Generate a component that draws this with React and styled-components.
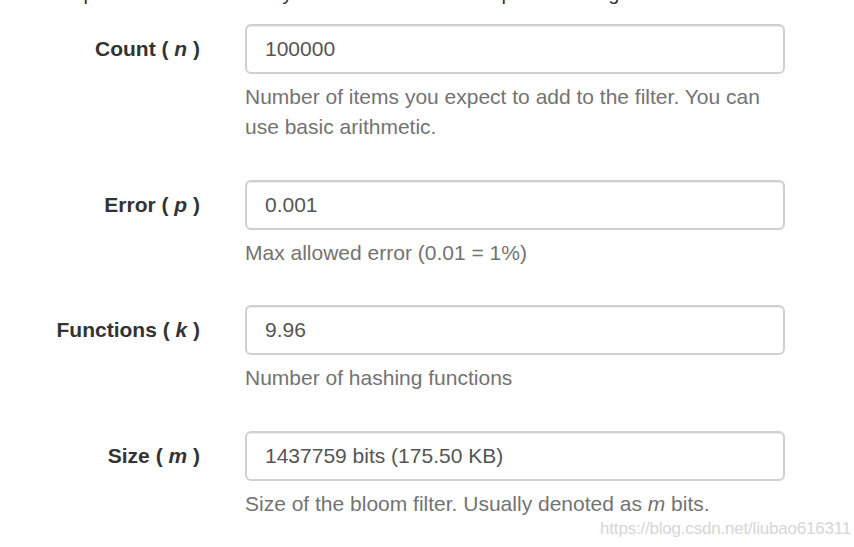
import React from 'react'
import styled, { createGlobalStyle } from 'styled-components'

const GlobalStyle = createGlobalStyle`
  html, body {
    margin: 0;
    padding: 0;
    background: #fff;
    overflow: hidden;
  }
  body {
    font-family: "Liberation Sans", Arial, sans-serif;
    color: #333;
  }
`

const Page = styled.div`
  position: relative;
  width: 854px;
  height: 547px;
  overflow: hidden;
`

const Intro = styled.p`
  margin: -22px 0 16px 49px;
  font-size: 20px;
  line-height: 30px;
  white-space: nowrap;
  color: #333;
`

const Group = styled.div`
  display: grid;
  grid-template-columns: 200px 540px;
  column-gap: 45px;
  margin-bottom: 22.6px;
`

const Label = styled.label`
  text-align: right;
  font-size: 21px;
  font-weight: 700;
  line-height: 30px;
  padding-top: 10px;
  color: #333;

  i {
    font-style: italic;
  }
`

const Field = styled.div`
  display: flex;
  flex-direction: column;
`

const Input = styled.input`
  box-sizing: border-box;
  width: 540px;
  height: 50px;
  padding: 0 18px;
  border: 2px solid #d0d0d0;
  border-radius: 6px;
  box-shadow: inset 0 1px 1px rgba(0, 0, 0, 0.075);
  font-family: "Liberation Sans", Arial, sans-serif;
  font-size: 21px;
  color: #555;
  background: #fff;
  outline: none;
`

const Help = styled.div`
  margin-top: 8px;
  margin-bottom: 15px;
  font-size: 21px;
  line-height: 30px;
  color: #737373;
`

const Watermark = styled.div`
  position: absolute;
  right: 3px;
  bottom: 8px;
  font-size: 17px;
  color: #d6d6d6;
  text-shadow: 0 0 1px #fff;
  letter-spacing: -0.2px;
`

const rows = [
  {
    name: 'Count',
    sym: 'n',
    value: '100000',
    help: <>Number of items you expect to add to the filter. You can use basic arithmetic.</>,
  },
  {
    name: 'Error',
    sym: 'p',
    value: '0.001',
    help: <>Max allowed error (0.01 = 1%)</>,
  },
  {
    name: 'Functions',
    sym: 'k',
    value: '9.96',
    help: <>Number of hashing functions</>,
  },
  {
    name: 'Size',
    sym: 'm',
    value: '1437759 bits (175.50 KB)',
    help: <>Size of the bloom filter. Usually denoted as <i>m</i> bits.</>,
  },
]

const App = () => {
  return (
    <Page>
      <GlobalStyle />
      <Intro>Simple calculator that lets you work out the correct parameters given the other three values.</Intro>
      {rows.map((row) => (
        <Group key={row.name}>
          <Label>
            {row.name} ( <i>{row.sym}</i> )
          </Label>
          <Field>
            <Input defaultValue={row.value} />
            <Help>{row.help}</Help>
          </Field>
        </Group>
      ))}
      <Watermark>https://blog.csdn.net/liubao616311</Watermark>
    </Page>
  )
}

export default App
